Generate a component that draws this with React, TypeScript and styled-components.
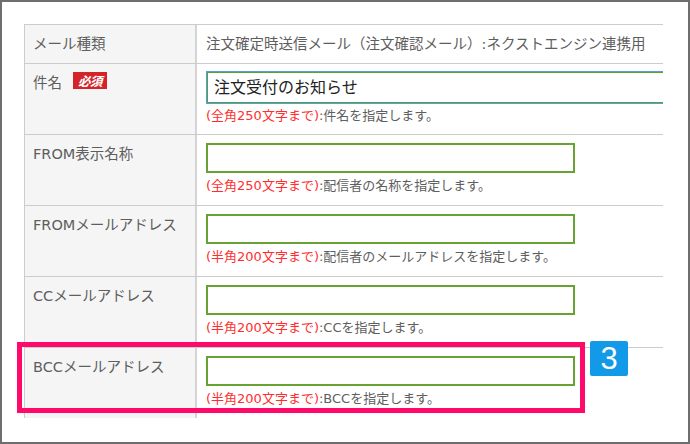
import React from "react";
import styled, { createGlobalStyle } from "styled-components";

const Global = createGlobalStyle`
  html, body { margin: 0; padding: 0; background: #fff; }
  * { box-sizing: border-box; }
  body { font-family: "DejaVu Sans", "Noto Sans CJK JP", sans-serif; }
`;

const Frame = styled.div`
  width: 690px;
  height: 444px;
  border: 2px solid #6e6e6e;
  padding: 22px 0 0 22px;
  overflow: hidden;
  background: #fff;
`;

const Table = styled.div`
  width: 639px;
  border-top: 1px solid #cccccc;
  border-left: 1px solid #cccccc;
`;

const Row = styled.div<{ $last?: boolean }>`
  position: relative;
  display: grid;
  grid-template-columns: 172px 1fr;
  border-bottom: ${(p) => (p.$last ? "none" : "1px solid #cccccc")};
`;

const Label = styled.div`
  background: #f5f5f5;
  border-right: 2px solid #d4d4d4;
  padding: 9px 8px;
  font-size: 14.5px;
  line-height: 20px;
  color: #5e5e5e;
  display: flex;
  align-items: flex-start;
  gap: 11px;
  white-space: nowrap;
`;

const Required = styled.span`
  display: inline-flex;
  align-items: center;
  justify-content: center;
  width: 34px;
  height: 17px;
  margin-top: -1px;
  background: #d3242a;
  color: #fff;
  font-size: 12.5px;
  font-weight: bold;
  font-style: italic;
  font-family: "Noto Sans CJK JP", sans-serif;
  letter-spacing: -0.5px;
`;

const Value = styled.div<{ $plain?: boolean }>`
  padding: ${(p) => (p.$plain ? "9px 0 9px 9px" : "8px 0 10px 9px")};
  overflow: hidden;
  font-size: 14.5px;
  line-height: 20px;
  color: #5e5e5e;
  white-space: nowrap;
`;

const Input = styled.div<{ $focused?: boolean }>`
  height: ${(p) => (p.$focused ? "31px" : "30px")};
  width: ${(p) => (p.$focused ? "520px" : "369px")};
  margin-left: ${(p) => (p.$focused ? "1px" : "0")};
  border: ${(p) => (p.$focused ? "1px solid #5f9e2f" : "2px solid #68a232")};
  outline: ${(p) => (p.$focused ? "1px solid #4fa0e8" : "none")};
  background: #fff;
  padding: 0 6px;
  font-size: 16px;
  line-height: 29px;
  color: #222;
`;

const Hint = styled.div<{ $tight?: boolean }>`
  margin-top: 4px;
  margin-bottom: ${(p) => (p.$tight ? "-1px" : "0")};
  font-size: 13px;
  line-height: 18px;
  color: #5e5e5e;
`;

const Limit = styled.span`
  color: #ff2e2e;
`;

const Highlight = styled.div`
  position: absolute;
  left: -8px;
  top: -6px;
  width: 568px;
  height: 71px;
  border: 5px solid #ff0a6a;
  pointer-events: none;
`;

const StepBadge = styled.div`
  position: absolute;
  left: 565px;
  top: -7px;
  width: 38px;
  height: 35px;
  border-radius: 2px;
  background: #129ae8;
  color: #fff;
  font-family: "Liberation Sans", Arial, sans-serif;
  font-size: 31px;
  line-height: 35px;
  text-align: center;
`;

type Field = { label: string; limit: string; desc: string };

const fields: Field[] = [
  { label: "FROM表示名称", limit: "(全角250文字まで)", desc: ":配信者の名称を指定します。" },
  { label: "FROMメールアドレス", limit: "(半角200文字まで)", desc: ":配信者のメールアドレスを指定します。" },
  { label: "CCメールアドレス", limit: "(半角200文字まで)", desc: ":CCを指定します。" },
  { label: "BCCメールアドレス", limit: "(半角200文字まで)", desc: ":BCCを指定します。" },
];

export default function App() {
  return (
    <>
      <Global />
      <Frame>
        <Table>
          <Row>
            <Label>メール種類</Label>
            <Value $plain>注文確定時送信メール（注文確認メール）:ネクストエンジン連携用</Value>
          </Row>
          <Row>
            <Label>
              件名<Required>必須</Required>
            </Label>
            <Value>
              <Input $focused>注文受付のお知らせ</Input>
              <Hint $tight>
                <Limit>(全角250文字まで)</Limit>:件名を指定します。
              </Hint>
            </Value>
          </Row>
          {fields.map((f, i) => {
            const last = i === fields.length - 1;
            return (
              <Row key={f.label} $last={last}>
                <Label>{f.label}</Label>
                <Value>
                  <Input />
                  <Hint>
                    <Limit>{f.limit}</Limit>
                    {f.desc}
                  </Hint>
                </Value>
                {last && (
                  <>
                    <Highlight />
                    <StepBadge>3</StepBadge>
                  </>
                )}
              </Row>
            );
          })}
        </Table>
      </Frame>
    </>
  );
}
